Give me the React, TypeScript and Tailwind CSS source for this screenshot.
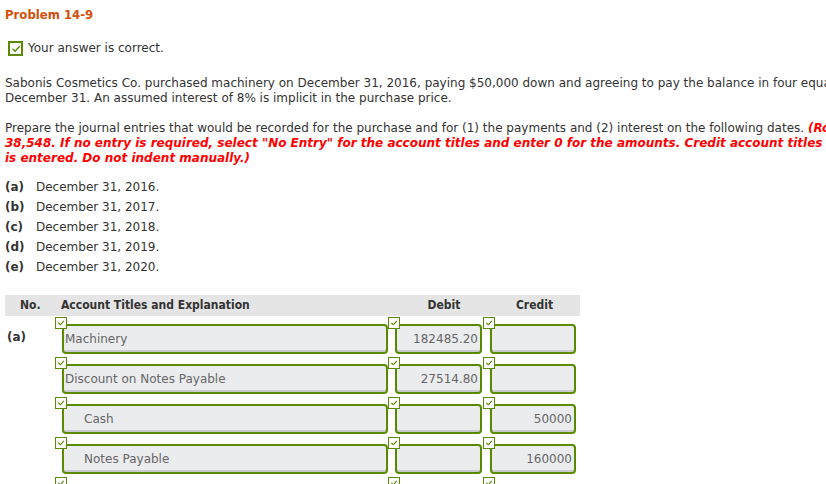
import React from "react";

const GREEN = "border-[#5a8a00]";

function Tick({ size = 12 }: { size?: number }) {
    return (
        <svg width={size - 4} height={size - 4} viewBox="0 0 10 10" fill="none">
            <path d="M2 5.2 L4.2 7.2 L8.2 2.8" stroke="#5a8a00" strokeWidth="1.4" strokeLinecap="round" strokeLinejoin="round" />
        </svg>
    );
}

function Field({ value, align = "left", indent = false, width }: { value: string; align?: "left" | "right"; indent?: boolean; width: string }) {
    return (
        <div className="relative pt-[7px] pl-[7px]">
            <div className={`absolute top-0 left-0 z-10 w-[12px] h-[12px] bg-white border ${GREEN} flex items-center justify-center`}>
                <Tick />
            </div>
            <div
                className={`${width} h-[30px] rounded-[4px] border-2 ${GREEN} bg-[#ebecee] shadow-[inset_0_-2px_0_#c9cbcf] flex items-center text-[12px] text-[#666] ${
                    align === "right" ? "justify-end pr-[2px]" : indent ? "pl-[20px]" : "pl-[1px]"
                }`}
            >
                {value}
            </div>
        </div>
    );
}

export default function App() {
    const dates = [
        ["(a)", "December 31, 2016."],
        ["(b)", "December 31, 2017."],
        ["(c)", "December 31, 2018."],
        ["(d)", "December 31, 2019."],
        ["(e)", "December 31, 2020."],
    ];

    const rows = [
        { no: "(a)", account: "Machinery", debit: "182485.20", credit: "", indent: false },
        { no: "", account: "Discount on Notes Payable", debit: "27514.80", credit: "", indent: false },
        { no: "", account: "Cash", debit: "", credit: "50000", indent: true },
        { no: "", account: "Notes Payable", debit: "", credit: "160000", indent: true },
        { no: "", account: "", debit: "", credit: "", indent: false },
    ];

    return (
        <div className="w-[826px] h-[484px] overflow-hidden bg-white text-[#333] text-[12px] leading-[15px] font-['DejaVu_Sans',Verdana,sans-serif]">
            <div className="px-[5px] pt-[7px]">
                <h1 className="text-[13px] font-bold text-[#d4500a] leading-[16px] font-['DejaVu_Sans_Condensed','DejaVu_Sans',sans-serif]">
                    Problem 14-9
                </h1>

                <div className="flex items-center gap-[5px] mt-[18px] pl-[3px]">
                    <div className="w-[15px] h-[15px] border-2 border-[#5a8a00] bg-white flex items-center justify-center">
                        <Tick size={14} />
                    </div>
                    <span>Your answer is correct.</span>
                </div>

                <p className="mt-[20px] whitespace-nowrap">
                    Sabonis Cosmetics Co. purchased machinery on December 31, 2016, paying $50,000 down and agreeing to pay the balance in four equal installments of $40,000 payable each
                    <br />
                    December 31. An assumed interest of 8% is implicit in the purchase price.
                </p>

                <p className="mt-[15px] whitespace-nowrap">
                    Prepare the journal entries that would be recorded for the purchase and for (1) the payments and (2) interest on the following dates.{" "}
                    <span className="text-[#ff0000] font-bold italic">(Round answers to 2 decimal places, e.g.</span>
                    <br />
                    <span className="text-[#ff0000] font-bold italic">
                        38,548. If no entry is required, select "No Entry" for the account titles and enter 0 for the amounts. Credit account titles are automatically indented when amount
                    </span>
                    <br />
                    <span className="text-[#ff0000] font-bold italic">is entered. Do not indent manually.)</span>
                </p>

                <div className="mt-[11px] flex flex-col">
                    {dates.map(([k, d]) => (
                        <div key={k} className="flex h-[20px] items-center">
                            <span className="w-[31px] font-bold">{k}</span>
                            <span>{d}</span>
                        </div>
                    ))}
                </div>

                <div className="mt-[18px] w-[575px]">
                    <div className="flex h-[21px] items-center bg-[#e5e5e5] font-bold font-['DejaVu_Sans_Condensed','DejaVu_Sans',sans-serif]">
                        <div className="w-[56px] pl-[15px]">No.</div>
                        <div className="w-[333px]">Account Titles and Explanation</div>
                        <div className="w-[95px] text-center pl-[5px]">Debit</div>
                        <div className="w-[91px] text-center">Credit</div>
                    </div>

                    {rows.map((r, i) => (
                        <div key={i} className="flex h-[40px] pt-[1px]">
                            <div className="w-[50px] pl-[2px] pt-[13px] font-bold">{r.no}</div>
                            <Field value={r.account} indent={r.indent} width="w-[326px]" />
                            <Field value={r.debit} align="right" width="w-[87px]" />
                            <div className="w-[1px]" />
                            <Field value={r.credit} align="right" width="w-[86px]" />
                        </div>
                    ))}
                </div>
            </div>
        </div>
    );
}
